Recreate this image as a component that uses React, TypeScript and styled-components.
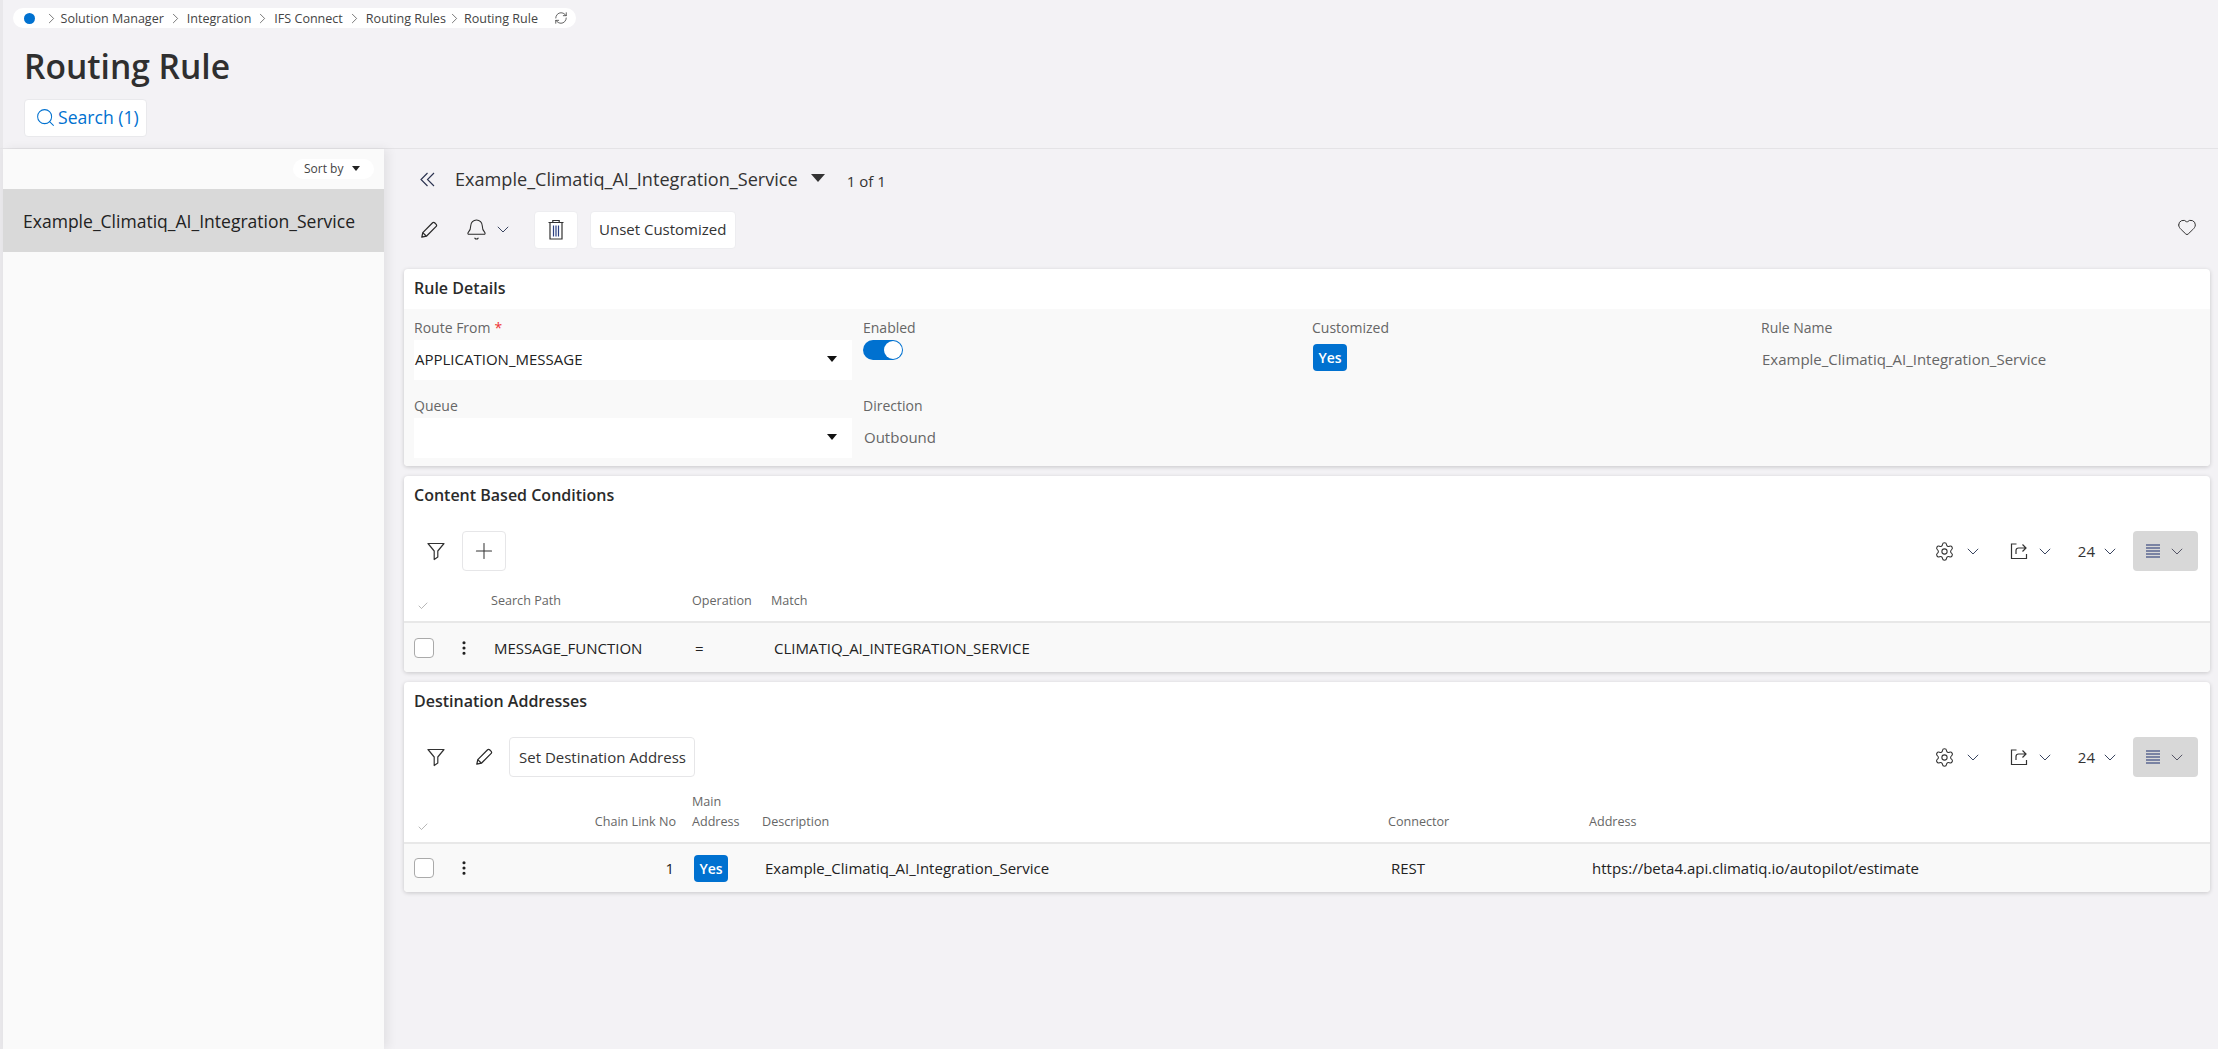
import React from 'react';
import styled, { createGlobalStyle } from 'styled-components';
import { ChevronRight, Search, Bell, Plus, Settings, Heart, RefreshCw, Check, EllipsisVertical } from 'lucide-react';

const Global = createGlobalStyle`
  html, body { margin: 0; padding: 0; background: #f3f2f5; }
  body { font-family: "Open Sans", "Liberation Sans", sans-serif; color: #2f2f2f; overflow: hidden; }
  #root { height: 1049px; }
  * { box-sizing: border-box; }
`;

const Page = styled.div`
  height: 1049px;
  display: flex;
  flex-direction: column;
  background: #f3f2f5;
  box-shadow: inset 3px 0 0 #e9e8eb;
`;
const TopArea = styled.header`
  height: 149px;
  flex: none;
  border-bottom: 1px solid #e4e3e6;
  padding: 8px 0 0 13px;
  display: flex;
  flex-direction: column;
  align-items: flex-start;
`;
const Crumbs = styled.nav`
  height: 20px;
  width: 563px;
  border-radius: 10px;
  background: #fff;
  display: flex;
  align-items: center;
  padding-left: 11px;
  font-size: 12.55px;
  color: #444;
`;
const Dot = styled.span`
  width: 11px;
  height: 11px;
  border-radius: 50%;
  background: #0071d0;
  margin-right: 6.5px;
  flex: none;
`;
const Crumb = styled.span`
  white-space: nowrap;
`;
const CrumbSep = styled(ChevronRight)<{ $m?: number }>`
  width: 17px;
  height: 17px;
  margin: 0 ${(p) => p.$m ?? 3}px;
  stroke-width: 1;
  color: #444;
  flex: none;
`;
const Reload = styled(RefreshCw)`
  width: 14px;
  height: 14px;
  margin-left: 16px;
  stroke-width: 1.4;
  color: #444;
`;
const PageTitle = styled.h1`
  margin: 16px 0 0 11px;
  font-size: 33.6px;
  line-height: 44px;
  font-weight: 600;
  color: #2f2f2f;
`;
const SearchButton = styled.button`
  margin: 11px 0 0 11px;
  width: 123px;
  height: 38px;
  background: #fff;
  border: 1px solid #e9e9ec;
  border-radius: 4px;
  color: #0071d0;
  font: 400 17.6px "Open Sans", sans-serif;
  display: flex;
  align-items: center;
  gap: 2px;
  padding: 0 0 2px 10px;
  svg { width: 21px; height: 21px; stroke-width: 1.15; flex: none; margin-top: 1px; }
`;
const Body = styled.div`
  flex: 1;
  display: flex;
  min-height: 0;
  padding-left: 3px;
`;
const ListPanel = styled.aside`
  width: 381px;
  flex: none;
  background: #fafafa;
  box-shadow: 4px 0 10px rgba(0, 0, 0, 0.07);
  padding-top: 10px;
`;
const SortRow = styled.div`
  display: flex;
  justify-content: flex-end;
  padding-right: 10px;
`;
const SortPill = styled.div`
  height: 20px;
  width: 81px;
  border-radius: 10px;
  background: #fff;
  display: flex;
  align-items: center;
  padding: 0 0 1px 11px;
  gap: 9px;
  font-size: 12px;
  color: #444;
`;
const Caret = styled.span<{ $w: number; $h: number; $c?: string }>`
  width: 0;
  height: 0;
  flex: none;
  border-left: ${(p) => p.$w / 2}px solid transparent;
  border-right: ${(p) => p.$w / 2}px solid transparent;
  border-top: ${(p) => p.$h}px solid ${(p) => p.$c ?? '#111'};
`;
const ListItem = styled.div`
  margin-top: 10px;
  height: 63px;
  background: #d9d9d9;
  display: flex;
  align-items: center;
  padding-left: 20px;
  font-size: 17.55px;
  color: #222;
`;
const Main = styled.main`
  flex: 1;
  min-width: 0;
  padding: 0 8px 0 20px;
  display: flex;
  flex-direction: column;
`;
const RecordBar = styled.div`
  height: 60px;
  display: flex;
  align-items: center;
`;
const BackGlyph = styled.svg`
  width: 15px;
  height: 15px;
  margin-left: 16px;
  flex: none;
  fill: none;
  stroke: #2b3350;
  stroke-width: 1.15;
`;
const RecordTitle = styled.div`
  margin-left: 20px;
  font-size: 18.1px;
  color: #333;
  white-space: nowrap;
`;
const RecordCount = styled.span`
  margin-left: 22px;
  padding-top: 3px;
  font-size: 15px;
  color: #333;
`;
const RecordCaret = styled(Caret)`
  margin: -3px 0 0 13px;
`;
const CommandBar = styled.div`
  height: 39px;
  margin-top: 1px;
  display: flex;
  align-items: center;
`;
const PlainIcon = styled.span<{ $w: number }>`
  width: ${(p) => p.$w}px;
  height: 38px;
  display: inline-flex;
  align-items: center;
  justify-content: center;
  color: #333;
  flex: none;
`;
const BellMenu = styled.span`
  display: inline-flex;
  align-items: center;
  gap: 9px;
  margin-left: 11px;
  margin-right: 25px;
`;
const CmdButton = styled.button<{ $square?: boolean }>`
  height: 38px;
  ${(p) => (p.$square ? 'width: 44px; padding: 0;' : 'padding: 0 9px 1px 8px;')}
  background: #fff;
  border: 1px solid #ededf0;
  border-radius: 4px;
  font: 400 15px "Open Sans", sans-serif;
  color: #333;
  display: inline-flex;
  align-items: center;
  justify-content: center;
  margin-right: 12px;
`;
const Spacer = styled.div`
  flex: 1;
`;
const HeartIcon = styled(Heart)`
  width: 20px;
  height: 20px;
  stroke-width: 1.2;
  color: #333;
  margin-right: 13px;
  margin-top: -6px;
`;
const Card = styled.section<{ $h: number }>`
  height: ${(p) => p.$h}px;
  background: #fff;
  border-radius: 4px;
  box-shadow: 0 1px 4px rgba(0, 0, 0, 0.18);
  overflow: hidden;
  flex: none;
  display: flex;
  flex-direction: column;
`;
const FirstCard = styled(Card)`
  margin-top: 20px;
`;
const NextCard = styled(Card)`
  margin-top: 10px;
`;
const CardTitle = styled.h2`
  height: 40px;
  flex: none;
  margin: 0;
  padding: 0 10px 2px;
  display: flex;
  align-items: center;
  font-size: 16px;
  font-weight: 600;
  color: #2b2b2b;
`;
const DetailGrid = styled.div`
  flex: 1;
  background: #f9f9f9;
  padding: 9px 10px 0;
  display: grid;
  grid-template-columns: repeat(4, 449px);
  grid-template-rows: 62px 62px;
  row-gap: 16px;
`;
const Field = styled.div`
  display: flex;
  flex-direction: column;
  align-items: flex-start;
`;
const Label = styled.label`
  height: 20px;
  margin-bottom: 2px;
  font-size: 14px;
  line-height: 20px;
  color: #666;
`;
const Required = styled.span`
  color: #e33;
  margin-left: 4px;
`;
const Select = styled.div`
  width: 438px;
  height: 40px;
  background: #fff;
  display: flex;
  align-items: center;
  justify-content: space-between;
  padding: 0 15px 2px 1px;
  font-size: 15px;
  color: #222;
`;
const ReadValue = styled.div`
  height: 40px;
  display: flex;
  align-items: center;
  padding: 0 0 2px 1px;
  font-size: 15px;
  color: #666;
`;
const Toggle = styled.div`
  width: 40px;
  height: 20px;
  border-radius: 10px;
  background: #0071d0;
  display: flex;
  justify-content: flex-end;
  align-items: center;
  padding-right: 1px;
`;
const Knob = styled.span`
  width: 18px;
  height: 18px;
  border-radius: 50%;
  background: #fff;
`;
const YesBadge = styled.span<{ $top?: number; $left?: number }>`
  width: 34px;
  height: 27px;
  border-radius: 4px;
  background: #0071d0;
  color: #fff;
  font-size: 14px;
  font-weight: 600;
  display: inline-flex;
  align-items: center;
  justify-content: center;
  margin-top: ${(p) => p.$top ?? 0}px;
  margin-left: ${(p) => p.$left ?? 1}px;
`;
const CardToolbar = styled.div`
  height: 40px;
  margin-top: 15px;
  padding: 0 12px 0 10px;
  display: flex;
  align-items: center;
  gap: 3.5px;
  flex: none;
`;
const ToolIcon = styled.span`
  width: 44px;
  height: 40px;
  display: inline-flex;
  align-items: center;
  justify-content: center;
  color: #333;
  flex: none;
`;
const ToolButton = styled.button<{ $square?: boolean }>`
  height: 40px;
  ${(p) => (p.$square ? 'width: 44px; padding: 0;' : 'padding: 0 8px 1px 9px;')}
  background: #fff;
  border: 1px solid #e6e6e8;
  border-radius: 4px;
  font: 400 15px "Open Sans", sans-serif;
  color: #333;
  display: inline-flex;
  align-items: center;
  justify-content: center;
  svg { width: 26px; height: 26px; stroke-width: 0.95; }
`;
const ToolMenu = styled.div<{ $gap: number; $left: number }>`
  display: flex;
  align-items: center;
  gap: ${(p) => p.$gap}px;
  margin-left: ${(p) => p.$left}px;
  color: #333;
  font-size: 15px;
`;
const ViewButton = styled.div`
  width: 65px;
  height: 40px;
  background: #d8d8d8;
  border-radius: 4px;
  margin-left: 13.5px;
  display: flex;
  align-items: center;
  padding-left: 13px;
  gap: 11px;
`;
const ChevronGlyph = styled.svg<{ $c?: string }>`
  width: 12px;
  height: 7px;
  flex: none;
  fill: none;
  stroke: ${(p) => p.$c ?? '#3a4560'};
  stroke-width: 1;
`;
const Chevron = ({ c }: { c?: string }) => (
  <ChevronGlyph viewBox="0 0 12 7" $c={c}>
    <path d="M0.8 0.8L6 6l5.2-5.2" />
  </ChevronGlyph>
);
const HeadRow = styled.div<{ $cols: string; $h: number }>`
  height: ${(p) => p.$h}px;
  flex: none;
  display: grid;
  grid-template-columns: ${(p) => p.$cols};
  align-items: end;
  padding-bottom: 10px;
  border-bottom: 2px solid #e8e8e8;
  font-size: 12.6px;
  line-height: 20px;
  color: #666;
`;
const TableRow = styled.div<{ $cols: string }>`
  flex: 1;
  display: grid;
  grid-template-columns: ${(p) => p.$cols};
  align-items: center;
  background: #f9f9f9;
  font-size: 15px;
  color: #222;
`;
const CheckHead = styled.span`
  padding-left: 13px;
  color: #888;
  line-height: 0;
  svg { width: 12px; height: 12px; stroke-width: 1.2; margin-bottom: -1px; }
`;
const HeadRight = styled.span`
  text-align: right;
  padding-right: 16px;
  white-space: nowrap;
`;
const RowLead = styled.div`
  display: flex;
  align-items: center;
  padding-left: 10px;
`;
const CheckBox = styled.span`
  width: 20px;
  height: 20px;
  border-radius: 4px;
  border: 1px solid #aaa;
  background: #fff;
  flex: none;
`;
const Kebab = styled(EllipsisVertical)`
  width: 18px;
  height: 18px;
  margin-left: 21px;
  stroke-width: 2.2;
  color: #222;
`;
const Cell = styled.span<{ $shift?: number }>`
  padding-left: ${(p) => p.$shift ?? 3}px;
  white-space: nowrap;
`;
const CellRight = styled.span`
  text-align: right;
  padding-right: 18px;
`;

const Pencil = () => (
  <svg width="18" height="18" viewBox="0 0 18 18" fill="none" stroke="#2a2a2a" strokeWidth="1.25" strokeLinejoin="round">
    <path d="M1.8 16.2l1-4.6L12.6 1.8a1.4 1.4 0 0 1 2 0l1.6 1.6a1.4 1.4 0 0 1 0 2L6.4 15.2z" />
    <path d="M2.8 11.6l3.6 3.6" />
  </svg>
);
const Trash = () => (
  <svg width="20" height="22" viewBox="0 0 20 22" fill="none" stroke="#333" strokeWidth="1.2">
    <path d="M6.8 3V1.5h6.4V3M2.5 3.5h15M4 3.5V20h12V3.5" />
    <path d="M7.5 6.5v11M10 6.5v11M12.5 6.5v11" stroke="#2a3f80" />
  </svg>
);
const Funnel = () => (
  <svg width="20" height="20" viewBox="0 0 20 20" fill="none" stroke="#333" strokeWidth="1.2" strokeLinejoin="round">
    <path d="M2 2.5h16l-6.2 7.5v6l-3.6 2.5V10z" />
  </svg>
);
const ShareBox = () => (
  <svg width="18" height="18" viewBox="0 0 18 18" fill="none" stroke="#333" strokeWidth="1.2">
    <path d="M6.5 2H1.5v14.5h15V12" />
    <path d="M6 12V8.5c0-1.5 1-2.5 2.5-2.5H16M12.5 2.5L16 6l-3.5 3.5" />
  </svg>
);
const Lines = () => (
  <svg width="14" height="14" viewBox="0 0 14 14" stroke="#1c2f6f" strokeWidth="1" style={{ flex: 'none' }}>
    <path d="M0 1h14M0 4h14M0 7h14M0 10h14M0 13h14" />
  </svg>
);
const Gear = styled(Settings)`
  width: 21px;
  height: 21px;
  stroke-width: 1.2;
  flex: none;
`;
const BellIcon = styled(Bell)`
  width: 23px;
  height: 23px;
  stroke-width: 1.1;
  color: #2a2a2a;
`;

function RightTools() {
  return (
    <>
      <Spacer />
      <ToolMenu $gap={11.5} $left={0}>
        <Gear />
        <Chevron />
      </ToolMenu>
      <ToolMenu $gap={11} $left={27.5}>
        <ShareBox />
        <Chevron />
      </ToolMenu>
      <ToolMenu $gap={9} $left={23.5}>
        <span>24</span>
        <Chevron />
      </ToolMenu>
      <ViewButton>
        <Lines />
        <Chevron c="#556" />
      </ViewButton>
    </>
  );
}

const condCols = '87px 201px 79px 1fr';
const destCols = '170px 118px 70px 626px 201px 1fr';

export default function App() {
  return (
    <Page>
      <Global />
      <TopArea>
        <Crumbs>
          <Dot />
          <CrumbSep $m={1} />
          <Crumb>Solution Manager</Crumb>
          <CrumbSep />
          <Crumb>Integration</Crumb>
          <CrumbSep />
          <Crumb>IFS Connect</Crumb>
          <CrumbSep />
          <Crumb>Routing Rules</Crumb>
          <CrumbSep $m={0.5} />
          <Crumb>Routing Rule</Crumb>
          <Reload />
        </Crumbs>
        <PageTitle>Routing Rule</PageTitle>
        <SearchButton>
          <Search />
          Search (1)
        </SearchButton>
      </TopArea>
      <Body>
        <ListPanel>
          <SortRow>
            <SortPill>
              Sort by
              <Caret $w={8} $h={5} $c="#222" />
            </SortPill>
          </SortRow>
          <ListItem>Example_Climatiq_AI_Integration_Service</ListItem>
        </ListPanel>
        <Main>
          <RecordBar>
            <BackGlyph viewBox="0 0 15 15">
              <path d="M7.5 1L1 7.5 7.5 14M14 1L7.5 7.5 14 14" />
            </BackGlyph>
            <RecordTitle>Example_Climatiq_AI_Integration_Service</RecordTitle>
            <RecordCaret $w={14} $h={8} $c="#333" />
            <RecordCount>1 of 1</RecordCount>
          </RecordBar>
          <CommandBar>
            <PlainIcon $w={50}>
              <Pencil />
            </PlainIcon>
            <BellMenu>
              <BellIcon />
              <Chevron />
            </BellMenu>
            <CmdButton $square>
              <Trash />
            </CmdButton>
            <CmdButton>Unset Customized</CmdButton>
            <Spacer />
            <HeartIcon />
          </CommandBar>
          <FirstCard $h={197}>
            <CardTitle>Rule Details</CardTitle>
            <DetailGrid>
              <Field>
                <Label>
                  Route From<Required>*</Required>
                </Label>
                <Select>
                  APPLICATION_MESSAGE
                  <Caret $w={11} $h={6} />
                </Select>
              </Field>
              <Field>
                <Label>Enabled</Label>
                <Toggle>
                  <Knob />
                </Toggle>
              </Field>
              <Field>
                <Label>Customized</Label>
                <YesBadge $top={4}>Yes</YesBadge>
              </Field>
              <Field>
                <Label>Rule Name</Label>
                <ReadValue>Example_Climatiq_AI_Integration_Service</ReadValue>
              </Field>
              <Field>
                <Label>Queue</Label>
                <Select>
                  <span />
                  <Caret $w={11} $h={6} />
                </Select>
              </Field>
              <Field>
                <Label>Direction</Label>
                <ReadValue>Outbound</ReadValue>
              </Field>
            </DetailGrid>
          </FirstCard>
          <NextCard $h={196}>
            <CardTitle>Content Based Conditions</CardTitle>
            <CardToolbar>
              <ToolIcon>
                <Funnel />
              </ToolIcon>
              <ToolButton $square>
                <Plus />
              </ToolButton>
              <RightTools />
            </CardToolbar>
            <HeadRow $cols={condCols} $h={52}>
              <CheckHead>
                <Check />
              </CheckHead>
              <span>Search Path</span>
              <span>Operation</span>
              <span>Match</span>
            </HeadRow>
            <TableRow $cols={condCols}>
              <RowLead>
                <CheckBox />
                <Kebab />
              </RowLead>
              <Cell>MESSAGE_FUNCTION</Cell>
              <Cell>=</Cell>
              <Cell>CLIMATIQ_AI_INTEGRATION_SERVICE</Cell>
            </TableRow>
          </NextCard>
          <NextCard $h={210}>
            <CardTitle>Destination Addresses</CardTitle>
            <CardToolbar>
              <ToolIcon>
                <Funnel />
              </ToolIcon>
              <ToolIcon>
                <Pencil />
              </ToolIcon>
              <ToolButton>Set Destination Address</ToolButton>
              <RightTools />
            </CardToolbar>
            <HeadRow $cols={destCols} $h={67}>
              <CheckHead>
                <Check />
              </CheckHead>
              <HeadRight>Chain Link No</HeadRight>
              <span>
                Main
                <br />
                Address
              </span>
              <span>Description</span>
              <span>Connector</span>
              <span>Address</span>
            </HeadRow>
            <TableRow $cols={destCols}>
              <RowLead>
                <CheckBox />
                <Kebab />
              </RowLead>
              <CellRight>1</CellRight>
              <span>
                <YesBadge $left={2}>Yes</YesBadge>
              </span>
              <Cell>Example_Climatiq_AI_Integration_Service</Cell>
              <Cell>REST</Cell>
              <Cell>https://beta4.api.climatiq.io/autopilot/estimate</Cell>
            </TableRow>
          </NextCard>
        </Main>
      </Body>
    </Page>
  );
}
